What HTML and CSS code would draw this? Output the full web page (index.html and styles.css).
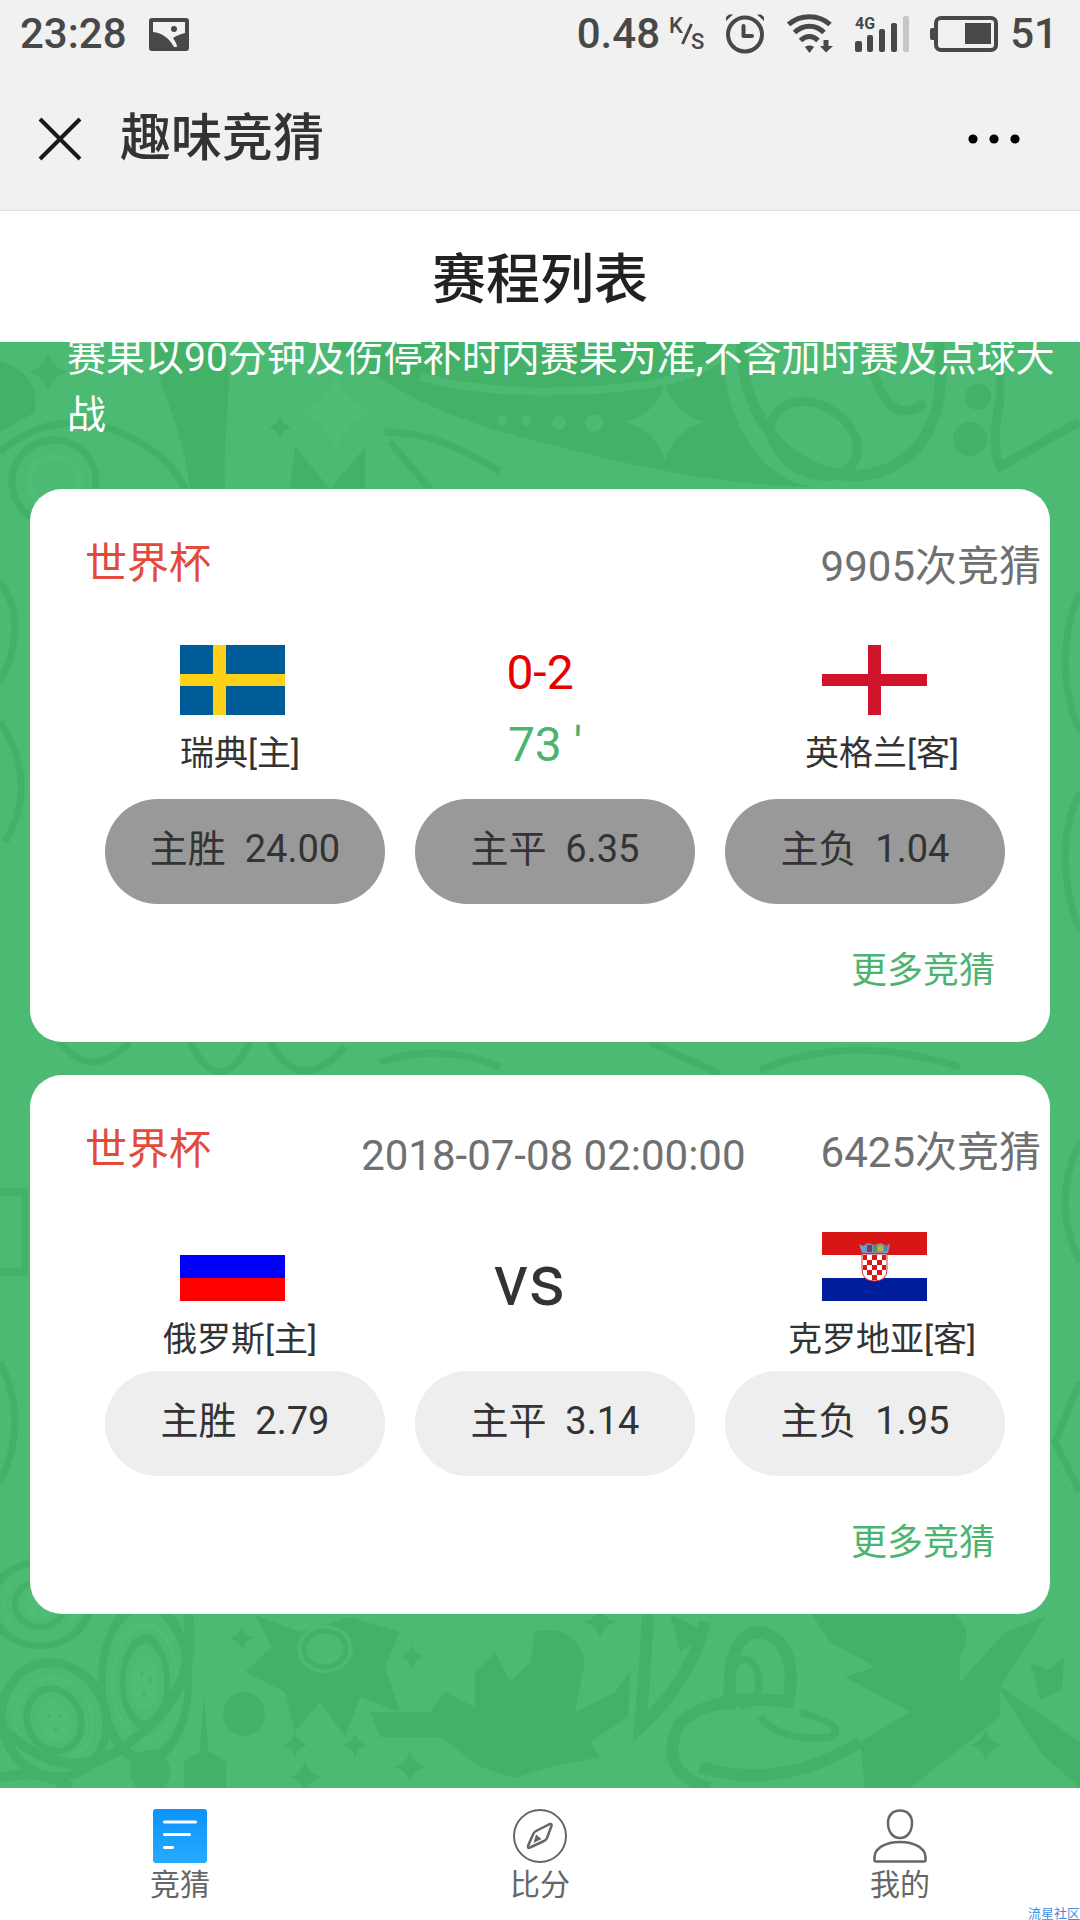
FILE: index.html
```html
<!DOCTYPE html>
<html lang="zh-CN">
<head>
<meta charset="utf-8">
<meta name="viewport" content="width=device-width, initial-scale=1">
<title>趣味竞猜</title>
<link rel="stylesheet" href="styles.css">
</head>
<body>
<div class="app">
  <div class="status">
    <span class="status-text">23:28</span>
    <svg class="status-photo" width="40" height="33" viewBox="0 0 40 33" aria-hidden="true">
      <rect width="40" height="33" rx="3" fill="#484848"/>
      <path d="M4 4H36V15C31 16 27 18 24 20C26 23 28 26 28 29H25C20 20 13 15 4 14Z" fill="#f1f1f1"/>
      <circle cx="25" cy="11" r="3" fill="#484848"/>
    </svg>
    <div class="status-right">
      <span class="status-text">0.48</span>
      <span class="rate"><span class="rate-k">K</span><svg class="rate-slash" width="12" height="22" viewBox="0 0 12 22" aria-hidden="true"><path d="M1.500 21L10.500 1" stroke="#484848" stroke-width="3"/></svg><span class="rate-s">S</span></span>
      <svg class="ic-alarm" width="38" height="40" viewBox="0 0 38 40" fill="none" stroke="#484848" aria-hidden="true">
        <circle cx="19" cy="20.500" r="17" stroke-width="4"/>
        <path d="M17.500 12V22H26" stroke-width="4" stroke-linecap="round" stroke-linejoin="round"/>
        <path d="M0 7V3L3 0.500H7ZM38 7V3L35 0.500H31Z" fill="#484848" stroke="none"/>
      </svg>
      <svg class="ic-wifi" width="46" height="40" viewBox="0 0 46 40" fill="none" stroke="#484848" stroke-width="5" aria-hidden="true">
        <path d="M1.500 10.500C13 0 32 0 43 10.500M7.500 18.500C16 10 29 10 37 18.500M13.500 26.500C19 21 26 21 31 26.500"/>
        <path d="M18 33C20 31 25 31 27 33L22.500 39ZM36.500 26H41.500V32H46L39 38.500L33 32H36.500Z" fill="#484848" stroke="none"/>
      </svg>
      <svg class="ic-signal" width="55" height="36" viewBox="0 0 55 36" fill="#484848" aria-hidden="true">
        <text class="net" x="0" y="13">4G</text>
        <rect x="0" y="25" width="7" height="11" rx="2"/><rect x="12" y="19" width="6" height="17" rx="2"/>
        <rect x="24" y="13" width="6" height="23" rx="2"/><rect x="36" y="7" width="6" height="29" rx="2"/>
        <rect x="48" y="0" width="6" height="36" rx="2" fill="#c6c6c6"/>
      </svg>
      <svg class="ic-battery" width="68" height="36" viewBox="0 0 68 36" fill="#484848" aria-hidden="true">
        <rect x="0" y="12" width="6" height="12" rx="2"/>
        <rect x="6" y="2" width="60" height="32" rx="5" fill="none" stroke="#484848" stroke-width="4"/>
        <rect x="35" y="7" width="26" height="21"/>
      </svg>
      <span class="status-text">51</span>
    </div>
  </div>

  <header class="nav">
    <button class="nav-button" type="button" aria-label="关闭">
      <svg width="44" height="44" viewBox="0 0 44 44" aria-hidden="true"><path d="M2 2L42 42M42 2L2 42" stroke="#1a1a1a" stroke-width="4"/></svg>
    </button>
    <h1 class="nav-title">趣味竞猜</h1>
    <button class="nav-button nav-more" type="button" aria-label="更多">
      <svg width="52" height="10" viewBox="0 0 52 10" aria-hidden="true"><circle cx="5" cy="5" r="4.600"/><circle cx="26" cy="5" r="4.600"/><circle cx="47" cy="5" r="4.600"/></svg>
    </button>
  </header>
  <h2 class="page-title">赛程列表</h2>

  <main class="feed">
    <svg class="pattern" viewBox="0 0 1080 1446" preserveAspectRatio="xMidYMid slice" aria-hidden="true">
      <defs>
        <path id="star" d="M0 -40Q8 -8 40 0Q8 8 0 40Q-8 8 -40 0Q-8 -8 0 -40Z"/>
        <g id="medal" fill="none" stroke="#44b169">
          <ellipse rx="70" ry="76" stroke-width="12"/><ellipse rx="52" ry="56" stroke="#4fbd76" stroke-width="4"/>
          <ellipse rx="36" ry="42" stroke-width="9"/><ellipse rx="22" ry="27" fill="#4fbd76" stroke="none"/>
          <path d="M-6 -10l2 4M8 -4l2 4M-3 10l2 4" stroke-width="3"/>
        </g>
      </defs>
      <path fill="#44b169" d="M330 0C380 40 430 75 560 105C640 125 720 145 860 147H1080V0ZM150 0C160 50 185 90 190 147H225C222 90 235 40 225 0Z"/>
      <path fill="#4cba72" d="M720 0C725 80 760 147 830 147H1080V0Z"/>
      <path fill="none" stroke="#4cba72" stroke-width="8" d="M420 35Q520 60 650 42Q720 30 730 0"/>
      <g fill="#4cba72"><circle cx="502" cy="79" r="5"/><circle cx="526" cy="79" r="5"/><circle cx="559" cy="81" r="7"/><circle cx="594" cy="81" r="9"/></g>
      <use href="#star" x="665" y="80" fill="#4cba72"/>
      <use href="#star" x="336" y="70" fill="#50bd77"/>
      <g fill="none" stroke="#44b169">
        <path d="M742 0C740 110 840 160 900 120C940 95 945 40 938 0" stroke-width="11"/>
        <ellipse cx="814" cy="97" rx="46" ry="34" transform="rotate(30 814 97)" stroke-width="9"/>
        <path d="M870 20Q890 90 925 60M1000 0V60Q990 100 1000 125Q1060 90 1080 80" stroke-width="9"/>
        <path d="M0 110Q60 60 130 95Q170 115 185 147M385 90Q440 90 500 130M390 100L430 147" stroke-width="7"/>
      </g>
      <g fill="#44b169"><circle cx="978" cy="55" r="13"/><circle cx="970" cy="97" r="17"/><path d="M295 105L330 147L365 105V147H290ZM0 20Q40 30 35 70L0 90Z"/></g>
      <g fill="none" stroke="#44b169" stroke-width="7">
        <circle cx="54" cy="140" r="42"/><circle cx="54" cy="140" r="25" stroke="#50bd77"/>
        <path d="M0 240Q30 280 0 340M0 380Q40 440 5 500M1080 250Q1050 320 1080 390M1080 450Q1050 510 1080 590M0 850H25V930H0M1080 800Q1050 860 1080 920M0 1020Q30 1080 0 1140M1080 1040L1055 1100L1080 1150"/>
        <path d="M60 700Q90 740 130 700M190 700Q220 760 250 700M270 700Q300 755 345 705M380 720Q440 700 500 725M650 700L720 732M760 728Q850 690 960 725"/>
      </g>
      <use href="#medal" transform="translate(145 1340) scale(.62 1.020)"/>
      <use href="#medal" transform="translate(54 1378) rotate(-20) scale(.74 .76)"/>
      <use href="#medal" transform="translate(40 1262) scale(.7 .55)"/>
      <path fill="none" stroke="#44b169" stroke-width="10" d="M0 1385Q70 1450 130 1400Q200 1350 188 1272M0 1436Q40 1425 70 1446"/>
      <g fill="#44b169">
        <path d="M255 1273L300 1290L350 1275L400 1290L385 1325L400 1370L360 1355L345 1395L320 1360L295 1390L285 1350L245 1330L272 1305Z"/>
        <ellipse cx="244" cy="1372" rx="21" ry="22"/><ellipse cx="150" cy="1430" rx="20" ry="22"/>
        <path d="M370 1370H430L445 1350L475 1365V1330L495 1310L510 1340L530 1320L535 1290Q575 1280 585 1320L575 1370L615 1350L630 1330L628 1375L590 1400L600 1415L550 1425L515 1436L480 1425L440 1395H380Z"/>
        <path d="M812 1272H955Q975 1290 960 1315V1340L1005 1290L1045 1275L1000 1345V1375L910 1446H865L860 1400L910 1370L845 1335L875 1325L830 1300Z"/>
        <path d="M670 1272L705 1290L680 1310ZM1030 1320l18 8l16-12l-2 32l-22 10ZM995 1340L1080 1400V1446L1040 1410ZM184 1420Q205 1400 226 1420V1446H184ZM199 1415L204 1355L209 1415Z"/>
      </g>
      <g fill="none" stroke="#44b169" stroke-width="12">
        <path d="M648 1272Q645 1330 640 1385Q690 1340 705 1280"/>
        <path d="M730 1368Q725 1290 760 1290Q800 1300 788 1360Q720 1350 680 1380Q655 1430 710 1446M700 1425Q780 1450 860 1400"/>
        <ellipse cx="745" cy="1340" rx="14" ry="23" stroke-width="7"/><path d="M760 1375Q780 1400 830 1395Q850 1385 800 1370" stroke-width="7"/>
      </g>
      <ellipse cx="325" cy="1307" rx="28" ry="24" fill="#4cba72"/>
      <ellipse cx="325" cy="1307" rx="21" ry="18" fill="none" stroke="#44b169" stroke-width="5"/>
      <circle cx="714" cy="1394" r="24" fill="#4cba72"/>
      <g fill="#44b169">
        <use href="#star" transform="translate(48 30) scale(.5)"/><use href="#star" transform="translate(280 85) scale(.3)"/>
        <use href="#star" transform="translate(242 1296) scale(.3)"/><use href="#star" transform="translate(412 1315) scale(.3)"/>
        <use href="#star" transform="translate(295 1403) scale(.3)"/><use href="#star" transform="translate(355 1403) scale(.3)"/>
        <use href="#star" transform="translate(600 1280) scale(.4)"/><use href="#star" transform="translate(305 1435) scale(.4)"/>
        <use href="#star" transform="translate(986 1403) scale(.4)"/><use href="#star" transform="translate(410 1425) scale(.4)"/>
      </g>
    </svg>

    <p class="notice">赛果以90分钟及伤停补时内赛果为准,不含加时赛及点球大战</p>

    <article class="card">
      <div class="card-head">
        <h3 class="league">世界杯</h3>
        <span class="count">9905次竞猜</span>
      </div>
      <div class="teams">
        <div class="team">
          <svg class="flag" viewBox="0 0 105 70" role="img" aria-label="瑞典国旗"><path d="M0 0H105V70H0Z" fill="#005b99"/><path d="M33 0H46V70H33ZM0 29H105V41H0Z" fill="#fcd116"/></svg>
          <span class="team-name">瑞典[主]</span>
        </div>
        <div class="score"><strong class="goals">0-2</strong><span class="minute">73 '</span></div>
        <div class="team">
          <svg class="flag" viewBox="0 0 105 70" role="img" aria-label="英格兰国旗"><path d="M0 0H105V70H0Z" fill="#fff"/><path d="M46 0H59V70H46ZM0 29H105V41H0Z" fill="#cf142b"/></svg>
          <span class="team-name">英格兰[客]</span>
        </div>
      </div>
      <div class="odds">
        <button class="odd" type="button" disabled>主胜&nbsp; 24.00</button>
        <button class="odd" type="button" disabled>主平&nbsp; 6.35</button>
        <button class="odd" type="button" disabled>主负&nbsp; 1.04</button>
      </div>
      <a class="more" href="#">更多竞猜</a>
    </article>

    <article class="card">
      <div class="card-head">
        <h3 class="league">世界杯</h3>
        <time class="kickoff" datetime="2018-07-08T02:00:00">2018-07-08 02:00:00</time>
        <span class="count">6425次竞猜</span>
      </div>
      <div class="teams">
        <div class="team">
          <svg class="flag" viewBox="0 0 105 70" role="img" aria-label="俄罗斯国旗"><path d="M0 0H105V24H0Z" fill="#fff"/><path d="M0 24H105V47H0Z" fill="#00f"/><path d="M0 47H105V70H0Z" fill="#f00"/></svg>
          <span class="team-name">俄罗斯[主]</span>
        </div>
        <div class="versus">vs</div>
        <div class="team">
          <svg class="flag" viewBox="0 0 105 70" role="img" aria-label="克罗地亚国旗">
            <path d="M0 1H105V24H0Z" fill="#d81616"/><path d="M0 24H105V47H0Z" fill="#fff"/><path d="M0 47H105V70H0Z" fill="#001d9b"/>
            <path d="M40 23H65V38Q65 50 52.500 50Q40 50 40 38Z" fill="#fff" stroke="#d8303a"/>
            <path fill="#d81616" d="M41 24h4v5h-4zM50 24h5v5h-5zM60 24h4v5h-4zM45 29h5v5h-5zM55 29h5v5h-5zM41 34h4v5h-4zM50 34h5v5h-5zM60 34h4v5h-4zM45 39h5v5h-5zM55 39h5v5h-5zM50 44h5v5h-5z"/>
            <path d="M37 13l4 2l5-3l6 2l7-2l5 3l4-2l-2 9H40Z" fill="#8d8fb0"/>
            <path d="M39 15h4v5h-3z" fill="#5aa2dc"/><path d="M45 14h5v7h-5z" fill="#54467e"/><path d="M51 14h4v7h-4z" fill="#5b8f5a"/><path d="M56 15h5v5h-5z" fill="#b5b34a"/><path d="M62 15h4l-1 5h-3z" fill="#4a84c8"/>
          </svg>
          <span class="team-name">克罗地亚[客]</span>
        </div>
      </div>
      <div class="odds">
        <button class="odd" type="button">主胜&nbsp; 2.79</button>
        <button class="odd" type="button">主平&nbsp; 3.14</button>
        <button class="odd" type="button">主负&nbsp; 1.95</button>
      </div>
      <a class="more" href="#">更多竞猜</a>
    </article>
  </main>

  <nav class="tabs">
    <a class="tab" href="#" aria-current="page">
      <svg class="tab-icon" viewBox="0 0 54 54" aria-hidden="true">
        <defs><linearGradient id="blue" x1="0" y1="0" x2="0" y2="1"><stop offset="0" stop-color="#0a93fb"/><stop offset="1" stop-color="#27aaff"/></linearGradient></defs>
        <rect width="54" height="54" rx="3" fill="url(#blue)"/>
        <path d="M11.500 13H42.500M11.500 25.500H36.500M11.500 38.500H19.500" stroke="#fff" stroke-width="3" stroke-linecap="round"/>
      </svg>
      <span>竞猜</span>
    </a>
    <a class="tab" href="#">
      <svg class="tab-icon" viewBox="0 0 54 54" fill="none" stroke="#666" stroke-width="2" aria-hidden="true">
        <circle cx="27" cy="27" r="26"/>
        <path d="M37 15Q39 14.500 38.500 17L34 29Q33 31 31 32L17 38.500Q14.500 39.500 15 37L20 25.500Q21 23 23 22Z" stroke-width="2.500"/>
        <path d="M23 25.500L28.500 30L20.500 34Z" fill="#666" stroke="none"/>
      </svg>
      <span>比分</span>
    </a>
    <a class="tab" href="#">
      <svg class="tab-icon" viewBox="0 0 54 54" fill="none" stroke="#666" stroke-width="2.500" aria-hidden="true">
        <path d="M27 1.500C34 1.500 39 6 39 14C39 23 34 29 27 29C20 29 15 23 15 14C15 6 20 1.500 27 1.500Z"/>
        <path d="M27 33C41 33 52.500 39 52.500 48V51Q52.500 52.500 51 52.500H3Q1.500 52.500 1.500 51V48C1.500 39 13 33 27 33Z"/>
      </svg>
      <span>我的</span>
    </a>
    <span class="watermark">流星社区</span>
  </nav>
</div>
</body>
</html>
```
FILE: styles.css
```css
* { box-sizing: border-box; margin: 0; padding: 0; }

body {
  font-family: Roboto, "Noto Sans CJK SC", sans-serif;
  color: #333;
  background: #fff;
}

button { font: inherit; color: inherit; border: 0; background: none; }
a { color: inherit; text-decoration: none; }
svg { display: block; flex: none; }

.app { display: flex; flex-direction: column; min-height: 100vh; }

/* Status bar */
.status {
  display: flex;
  align-items: center;
  height: 72px;
  padding: 0 22px 4px 20px;
  background: #f1f1f1;
  color: #484848;
}
.status-text { font-size: 42px; line-height: 48px; font-weight: 500; }
.status-photo { margin-left: 22px; }
.status-right { display: flex; align-items: center; margin-left: auto; }
.rate {
  display: flex;
  align-items: center;
  margin-left: 9px;
  font-size: 22px;
  line-height: 16px;
  font-weight: 500;
}
.rate-k { padding-bottom: 16px; }
.rate-slash { margin: 0 -2px; }
.rate-s { padding-top: 16px; }
.ic-alarm { margin-left: 22px; }
.ic-wifi { margin-left: 23px; }
.ic-signal { margin-left: 22px; overflow: visible; }
.ic-battery { margin-left: 20px; margin-right: 12px; }
.net { font-size: 16px; font-weight: 700; }

/* Title bars */
.nav {
  display: flex;
  align-items: center;
  height: 139px;
  padding: 0 60px 4px 38px;
  background: #f1f1f1;
  border-bottom: 1px solid #dfdfdf;
}
.nav-title { margin-left: 38px; font-size: 51px; line-height: 72px; font-weight: 500; }
.nav-more { margin-left: auto; }
.page-title {
  padding: 31px 0 22px;
  font-size: 54px;
  line-height: 78px;
  font-weight: 500;
  text-align: center;
  color: #222;
}

/* Match feed */
.feed {
  position: relative;
  flex: 1;
  display: flex;
  flex-direction: column;
  gap: 33px;
  padding: 0 30px 33px;
  overflow: hidden;
  background: #4cba72;
}
.pattern { position: absolute; inset: 0; width: 100%; height: 100%; }
.notice {
  position: relative;
  margin: -12px -12px 12px 37px;
  font-size: 39px;
  line-height: 57px;
  color: #fff;
}
.card {
  position: relative;
  display: flex;
  flex-direction: column;
  padding: 45px 0 47px;
  border-radius: 32px;
  background: #fff;
}
.card-head {
  display: flex;
  align-items: flex-start;
  height: 60px;
  margin-bottom: 51px;
  padding: 0 9px 0 55px;
  font-size: 42px;
  line-height: 60px;
  color: #707070;
}
.league { margin-right: auto; font-size: 42px; font-weight: 400; color: #e34a3c; }
.kickoff { margin-right: 75px; padding-top: 6px; }
.count { padding-top: 3px; }

.teams {
  display: grid;
  grid-template-columns: repeat(3, 1fr);
  margin-bottom: 7px;
  padding: 0 15px 0 42px;
}
.team { display: flex; flex-direction: column; align-items: center; gap: 13px; }
.flag { width: 105px; height: 70px; }
.team-name { padding-left: 15px; font-size: 34px; line-height: 50px; white-space: nowrap; }
.score {
  display: flex;
  flex-direction: column;
  align-items: center;
  gap: 8px;
  padding: 0 27px 11px 0;
  font-size: 48px;
}
.goals { line-height: 56px; font-weight: 400; color: #e60000; }
.minute { padding-left: 10px; line-height: 72px; color: #4cb470; }
.versus { padding: 6px 48px 0 0; font-size: 72px; line-height: 88px; text-align: center; }

.odds {
  display: grid;
  grid-template-columns: repeat(3, 1fr);
  gap: 30px;
  margin-bottom: 43px;
  padding: 0 45px 0 75px;
}
.odd {
  height: 105px;
  padding-bottom: 6px;
  border-radius: 53px;
  background: #eee;
  font-size: 38px;
  line-height: 56px;
}
.odd:disabled { background: #999; color: #333; }
.more {
  align-self: flex-end;
  margin-right: 55px;
  font-size: 36px;
  line-height: 48px;
  color: #4cb470;
}

/* Bottom tabs */
.tabs {
  position: relative;
  display: grid;
  grid-template-columns: repeat(3, 1fr);
  padding: 21px 0 17px;
  overflow: hidden;
  background: #fff;
}
.tab {
  display: flex;
  flex-direction: column;
  align-items: center;
  gap: 4px;
  font-size: 30px;
  line-height: 36px;
  color: #666;
}
.tab-icon { width: 54px; height: 54px; }
.watermark {
  position: absolute;
  right: 0;
  bottom: 0;
  font-size: 13px;
  line-height: 13px;
  color: #3f8fe0;
}
```
